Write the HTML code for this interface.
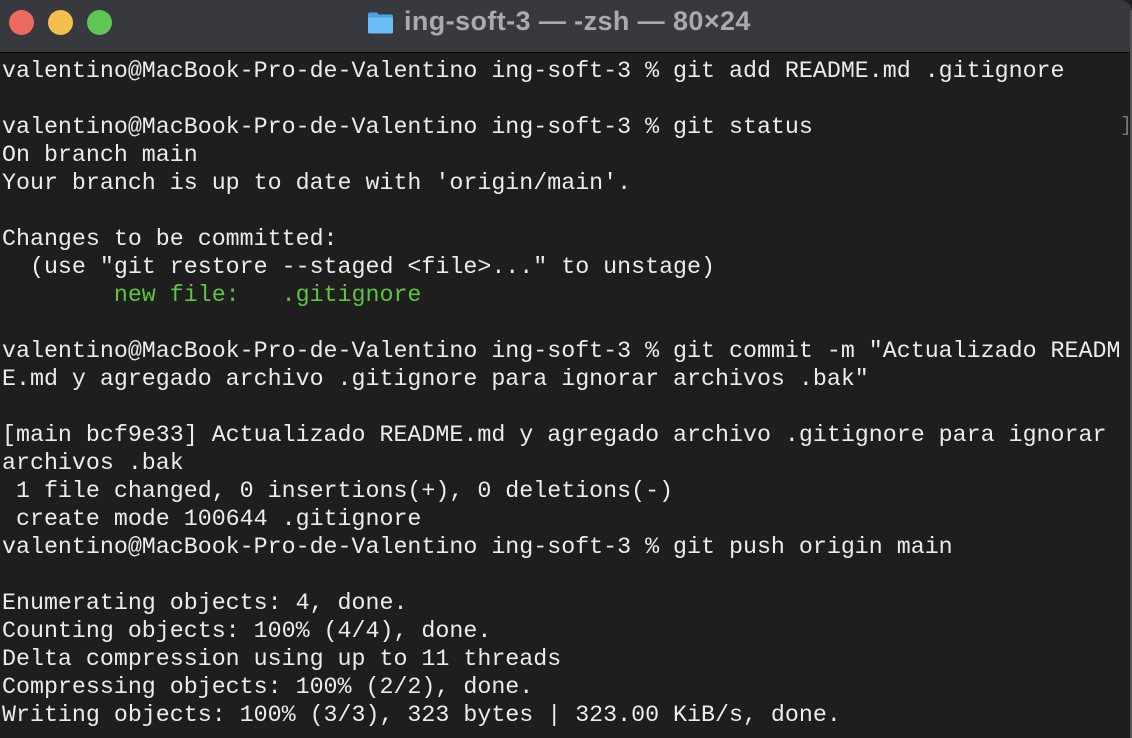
<!DOCTYPE html>
<html><head><meta charset="utf-8"><style>
html,body{margin:0;padding:0;background:#1e1e1e;}
body{width:1132px;height:738px;overflow:hidden;position:relative;font-family:"Liberation Sans",sans-serif;}
.tb{position:absolute;left:0;top:0;width:1132px;height:52px;background:#38383f;border-bottom:1px solid #0c0c0c;border-top-right-radius:12px;}
.dot{position:absolute;top:10px;width:25px;height:25px;border-radius:50%;}
.title{position:absolute;left:404px;top:6px;color:#a9a9af;font-weight:bold;font-size:27px;letter-spacing:0.4px;}
.folder{position:absolute;left:367px;top:11px;width:27px;height:24px;}
pre{position:absolute;left:2px;top:57px;margin:0;font-family:"Liberation Mono",monospace;font-size:23.3px;line-height:28px;color:#ececec;}
.g{color:#5fc241;}
.br{position:absolute;left:1120px;top:115px;color:#777;font-family:"Liberation Mono",monospace;font-size:20px;}
.edge{position:absolute;right:0;top:10px;width:2px;height:728px;background:#555;}
</style></head><body>
<div class="tb">
<div class="dot" style="left:9px;background:#ed6a5e"></div>
<div class="dot" style="left:48px;background:#f4bf4f"></div>
<div class="dot" style="left:87px;background:#61c554"></div>
<svg class="folder" viewBox="0 0 27 23"><path d="M1 3 Q1 1 3 1 H10 L12 3 H24 Q26 3 26 5 V21 Q26 22 24 22 H3 Q1 22 1 20Z" fill="#4aa3e8"/><rect x="1" y="6" width="25" height="16" rx="1.5" fill="#6cbcf5"/></svg>
<div class="title">ing-soft-3 — -zsh — 80×24</div>
</div>
<div class="edge"></div>
<div class="br">]</div>
<pre>valentino@MacBook-Pro-de-Valentino ing-soft-3 % git add README.md .gitignore

valentino@MacBook-Pro-de-Valentino ing-soft-3 % git status
On branch main
Your branch is up to date with 'origin/main'.

Changes to be committed:
  (use "git restore --staged &lt;file&gt;..." to unstage)
<span class="g">        new file:   .gitignore</span>

valentino@MacBook-Pro-de-Valentino ing-soft-3 % git commit -m "Actualizado READM
E.md y agregado archivo .gitignore para ignorar archivos .bak"

[main bcf9e33] Actualizado README.md y agregado archivo .gitignore para ignorar
archivos .bak
 1 file changed, 0 insertions(+), 0 deletions(-)
 create mode 100644 .gitignore
valentino@MacBook-Pro-de-Valentino ing-soft-3 % git push origin main

Enumerating objects: 4, done.
Counting objects: 100% (4/4), done.
Delta compression using up to 11 threads
Compressing objects: 100% (2/2), done.
Writing objects: 100% (3/3), 323 bytes | 323.00 KiB/s, done.</pre>
</body></html>
